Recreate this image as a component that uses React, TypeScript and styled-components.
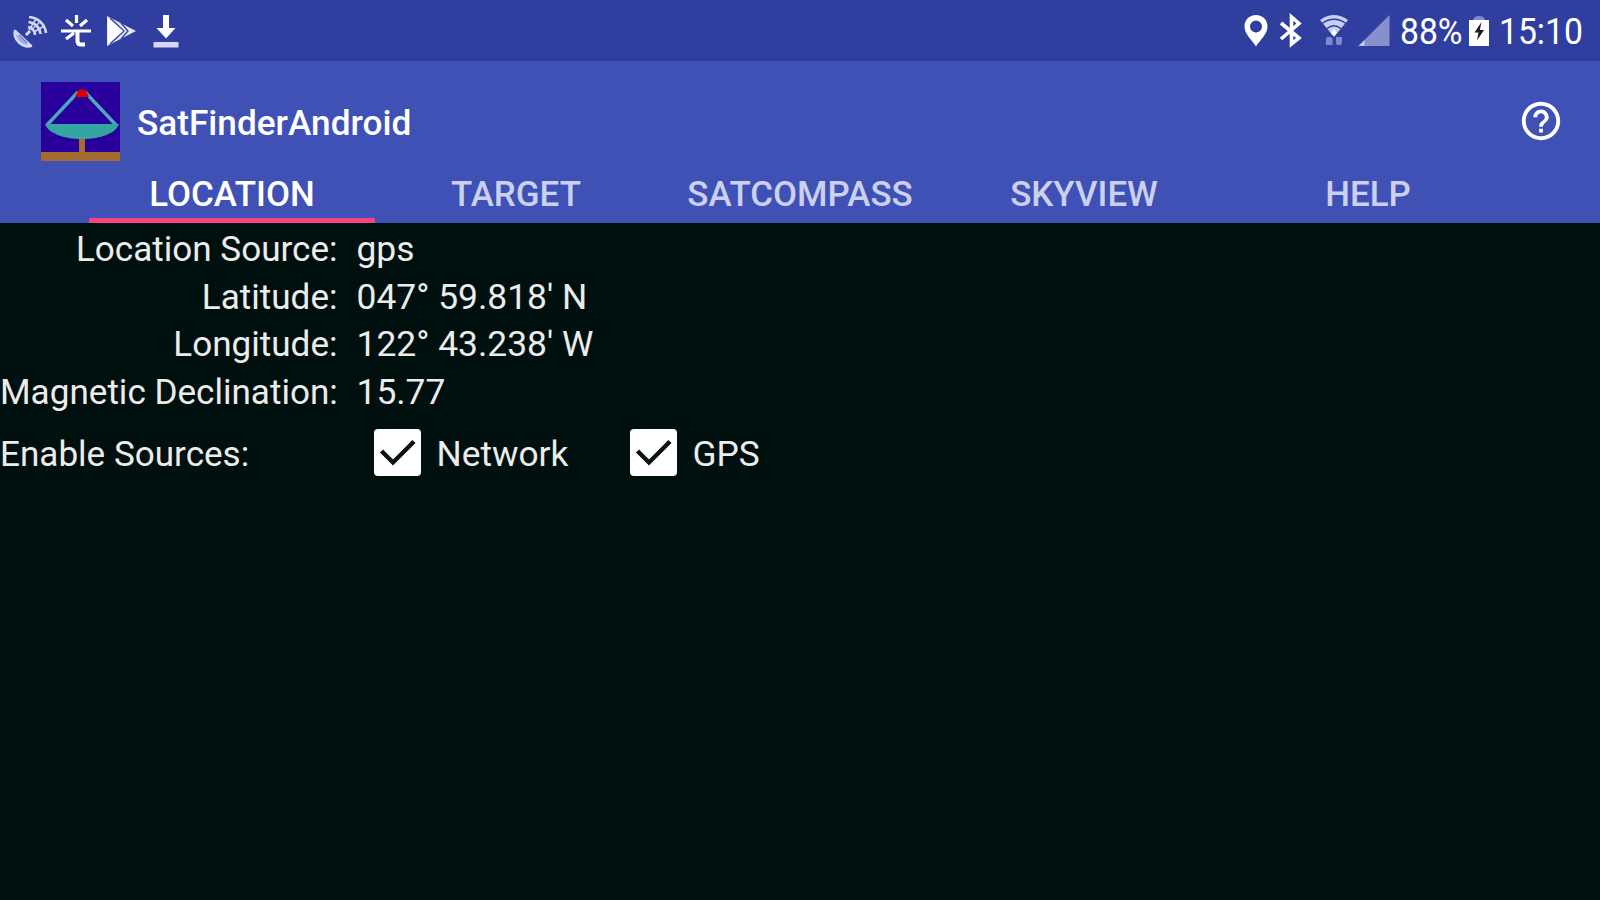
import React from 'react';
import styled, { createGlobalStyle } from 'styled-components';
import { MdHelpOutline } from 'react-icons/md';

const GlobalStyle = createGlobalStyle`
  * {
    box-sizing: border-box;
  }

  body {
    margin: 0;
    background-color: #00100e;
    font-family: Roboto, sans-serif;
  }
`;

const Screen = styled.div`
  width: 1600px;
  height: 900px;
  overflow: hidden;
  background-color: #00100e;
`;

const StatusBar = styled.div`
  height: 61px;
  display: flex;
  justify-content: space-between;
  padding: 0 17px 0 12px;
  background-color: #303f9f;
  color: #fff;
`;

const StatusGroup = styled.div`
  display: flex;
  align-items: center;
  height: 62px;
`;

const Notifications = styled(StatusGroup)`
  gap: 8px;
`;

const StatusIcon = styled.svg<{ $width: number; $gap?: number }>`
  display: block;
  flex: none;
  width: ${({ $width }) => $width}px;
  height: 38px;
  margin-right: ${({ $gap = 0 }) => $gap}px;
`;

const StatusText = styled.div<{ $width: number }>`
  width: ${({ $width }) => $width}px;
  font-size: 37px;
  line-height: 62px;
  white-space: nowrap;
  transform: translateY(1px) scaleX(0.91);
  transform-origin: left center;
`;

const Header = styled.div`
  height: 162px;
  display: flex;
  flex-direction: column;
  justify-content: space-between;
  background-color: #3f51b5;
`;

const Toolbar = styled.div`
  height: 100px;
  display: flex;
  align-items: center;
  padding: 20px 36px 0 41px;
`;

const Logo = styled.svg`
  display: block;
  width: 79px;
  height: 79px;
`;

const Title = styled.div`
  flex: 1;
  margin-left: 17px;
  padding-top: 4px;
  font-weight: 500;
  font-size: 35.2px;
  line-height: 44px;
  color: #fff;
`;

const HelpIcon = styled(MdHelpOutline)`
  width: 46px;
  height: 46px;
  color: #fff;
`;

const Tabs = styled.div`
  height: 62px;
  display: flex;
  padding: 0 90px;
`;

const Tab = styled.div<{ $active: boolean }>`
  position: relative;
  flex: 1;
  padding-top: 13px;
  text-align: center;
  font-weight: 500;
  font-size: 34.9px;
  line-height: 42px;
  color: ${({ $active }) => ($active ? '#fff' : '#cbd0ef')};
`;

const Indicator = styled.div`
  position: absolute;
  left: -1px;
  right: -1px;
  bottom: 0;
  height: 5px;
  border-radius: 2px 2px 0 0;
  background-color: #f8457f;
`;

const Content = styled.div`
  padding-top: 3px;
  font-size: 35.1px;
  color: #ececec;
`;

const InfoGrid = styled.div`
  display: grid;
  grid-template-columns: 337.5px 1fr;
  column-gap: 19px;
  grid-auto-rows: 47.5px;
  line-height: 47.5px;
  white-space: nowrap;
`;

const InfoLabel = styled.div`
  text-align: right;
`;

const InfoValue = styled.div`
  font-size: 35.4px;
`;

const Sources = styled.div`
  display: flex;
  align-items: center;
  height: 73px;
`;

const SourcesLabel = styled.div`
  width: 373.5px;
  padding-top: 3px;
`;

const Source = styled.div<{ $width: number }>`
  width: ${({ $width }) => $width}px;
  display: flex;
  align-items: center;
  gap: 16px;
`;

const SourceName = styled.div`
  padding-top: 3px;
  font-size: 35.3px;
`;

const CheckBox = styled.svg`
  display: block;
  width: 47px;
  height: 47px;
`;

const tabs = ['LOCATION', 'TARGET', 'SATCOMPASS', 'SKYVIEW', 'HELP'];

const info = [
  { label: 'Location Source:', value: 'gps' },
  { label: 'Latitude:', value: "047° 59.818' N" },
  { label: 'Longitude:', value: "122° 43.238' W" },
  { label: 'Magnetic Declination:', value: '15.77' },
];

const sources = [
  { name: 'Network', width: 256 },
  { name: 'GPS', width: 140 },
];

const SatelliteIcon: React.FC = () => (
  <StatusIcon $width={37} viewBox="0 0 37 38" fill="none" stroke="#d3d8f4">
    <path d="M3 19 C1 27 10 36 19 34 Z" fill="#a3acdf" strokeWidth="2.6" strokeLinejoin="round" />
    <path d="M7 23 L15 31" stroke="#6f7bc4" strokeWidth="1.5" />
    <path d="M14 23 L18 19" strokeWidth="3" />
    <path d="M16 15 A8 8 0 0 1 23 23" strokeWidth="2.6" />
    <path d="M16.5 10 A13 13 0 0 1 28.5 22" strokeWidth="2.6" />
    <path d="M17 5 A18 18 0 0 1 34 21" strokeWidth="2.6" />
    <path d="M17 18 L24 7 M19 18 L29 9 M22 20 L32 14" strokeWidth="1.5" />
  </StatusIcon>
);

const SparkIcon: React.FC = () => (
  <StatusIcon $width={35} viewBox="0 0 35 38" fill="none" stroke="#fff" strokeWidth="3.2">
    <path d="M19.5 3 V11 M9 8 L16 14 M30 8 L23 14 M4 19 H34 M17 21 L9 27" />
    <path d="M20.5 19 V29 Q20.5 32.5 24 32.5 H28" strokeWidth="4" />
  </StatusIcon>
);

const PlayIcon: React.FC = () => (
  <StatusIcon $width={36} $gap={9} viewBox="0 0 36 38">
    <path d="M7 4 L36 19 L7 34 Z" fill="#e4e7f8" />
    <path d="M10 6 L24 19 L10 32 M21 11 L28 19 L21 27" fill="none" stroke="#303f9f" strokeWidth="1.3" />
    <path d="M8 6 L23 19 L8 32 Z" fill="#fff" />
  </StatusIcon>
);

const DownloadIcon: React.FC = () => (
  <StatusIcon $width={26} viewBox="0 0 26 38">
    <path d="M10 3 H16 V16 H22.5 L13 26.5 L3.5 16 H10 Z" fill="#fff" />
    <path d="M0.5 30 H25.5 V35.5 H0.5 Z" fill="#d5d9f3" />
  </StatusIcon>
);

const PinIcon: React.FC = () => (
  <StatusIcon $width={24} $gap={11} viewBox="0 0 24 38">
    <path
      d="M12 3 C5.2 3 0.5 8 0.5 14.5 C0.5 22 8 28 12 34.5 C16 28 23.5 22 23.5 14.5 C23.5 8 18.8 3 12 3 Z M12 8.5 A6 6 0 1 1 12 20.5 A6 6 0 1 1 12 8.5 Z"
      fill="#fff"
      fillRule="evenodd"
    />
  </StatusIcon>
);

const BluetoothIcon: React.FC = () => (
  <StatusIcon $width={24} $gap={16} viewBox="0 0 24 38" fill="none" stroke="#fff" strokeWidth="3.6">
    <path d="M2 11 L20 26 L12.5 32 V5 L20 11.5 L2 27" />
  </StatusIcon>
);

const WifiIcon: React.FC = () => (
  <StatusIcon $width={30} $gap={9} viewBox="0 0 30 38">
    <path d="M1 8 Q15 -2 29 8 L15 25 Z" fill="#c9cff0" />
    <path d="M3 11.5 Q15 3 27 11.5 M8 16.5 Q15 11 22 16.5" fill="none" stroke="#303f9f" strokeWidth="1.5" />
    <path d="M15 17 L18 21 L15 24 L12 21 Z" fill="#fff" />
    <path d="M8 25 H12 L13.5 27 V33 H7 V27 Z M17 25 H23 V31 L21.5 33 H18 L17 31 Z" fill="#7f8acb" />
  </StatusIcon>
);

const SignalIcon: React.FC = () => (
  <StatusIcon $width={32} $gap={10} viewBox="0 0 32 38">
    <path d="M31.5 3 V34 H0.5 Z" fill="#8790cc" />
    <path d="M6.5 28 V34 H0.5 Z" fill="#c3c9ec" />
  </StatusIcon>
);

const BatteryIcon: React.FC = () => (
  <StatusIcon $width={20} $gap={10} viewBox="0 0 20 38">
    <path d="M4 8 Q5 4 10 4 Q15 4 16 8 Z" fill="#7f8acb" />
    <path d="M0 8 H20 V34 H0 Z" fill="#fff" />
    <path d="M12.5 10 L5.5 20.5 H9.500 L8 28.5 L15 18 H10.8 Z" fill="#1d1d1d" />
  </StatusIcon>
);

const App: React.FC = () => (
  <Screen>
    <GlobalStyle />
    <StatusBar>
      <Notifications>
        <SatelliteIcon />
        <SparkIcon />
        <PlayIcon />
        <DownloadIcon />
      </Notifications>
      <StatusGroup>
        <PinIcon />
        <BluetoothIcon />
        <WifiIcon />
        <SignalIcon />
        <StatusText $width={69}>88%</StatusText>
        <BatteryIcon />
        <StatusText $width={84.5}>15:10</StatusText>
      </StatusGroup>
    </StatusBar>
    <Header>
      <Toolbar>
        <Logo viewBox="0 0 79 79">
          <rect width="79" height="79" fill="#29009b" />
          <path d="M37 10 L6 43 M44 10 L75 43" stroke="#4aa8bd" strokeWidth="3.4" />
          <path d="M34 15 Q37 7 41 7 Q45 7 48 15 Z" fill="#dc0000" />
          <rect x="38" y="55" width="6" height="16" fill="#a36c31" />
          <path d="M4 42 H78 C75 51 60 57 41 57 C22 57 7 51 4 42 Z" fill="#35a5a2" />
          <rect y="70" width="79" height="9" fill="#a36c31" />
        </Logo>
        <Title>SatFinderAndroid</Title>
        <HelpIcon />
      </Toolbar>
      <Tabs>
        {tabs.map((tab) => (
          <Tab key={tab} $active={tab === 'LOCATION'}>
            {tab}
            {tab === 'LOCATION' && <Indicator />}
          </Tab>
        ))}
      </Tabs>
    </Header>
    <Content>
      <InfoGrid>
        {info.map(({ label, value }) => (
          <React.Fragment key={label}>
            <InfoLabel>{label}</InfoLabel>
            <InfoValue>{value}</InfoValue>
          </React.Fragment>
        ))}
      </InfoGrid>
      <Sources>
        <SourcesLabel>Enable Sources:</SourcesLabel>
        {sources.map(({ name, width }) => (
          <Source key={name} $width={width}>
            <CheckBox viewBox="0 0 47 47">
              <rect width="47" height="47" rx="4" fill="#fff" />
              <path d="M7.5 22 L19 33.5 L40 12.5" fill="none" stroke="#0a1413" strokeWidth="4.4" />
            </CheckBox>
            <SourceName>{name}</SourceName>
          </Source>
        ))}
      </Sources>
    </Content>
  </Screen>
);

export default App;
